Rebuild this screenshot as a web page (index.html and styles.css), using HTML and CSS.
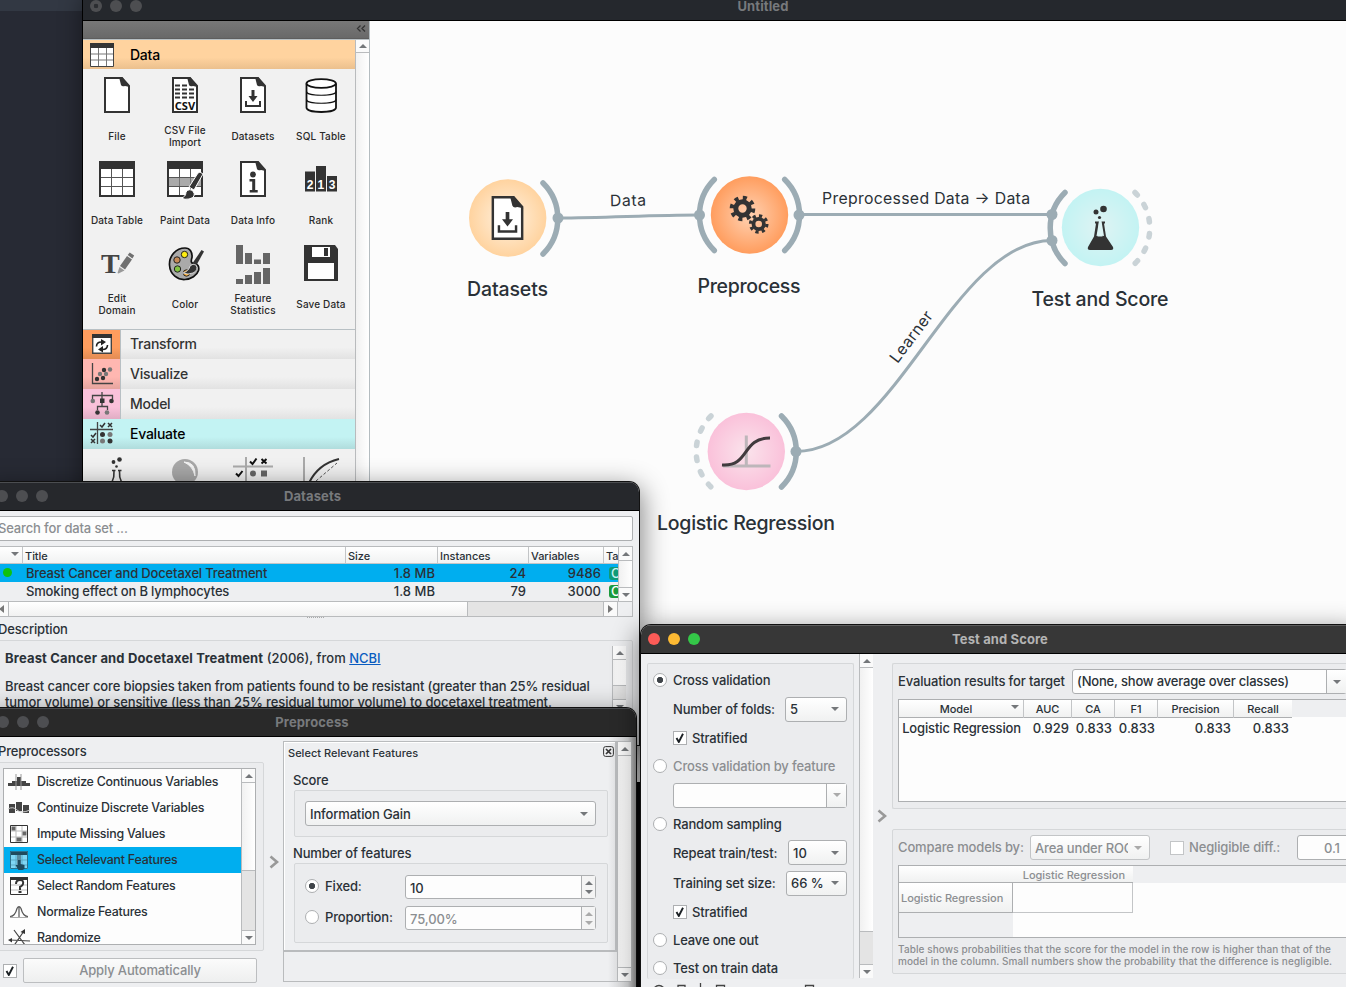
FILE: index.html
```html
<!DOCTYPE html>
<html lang="en">
<head>
<meta charset="utf-8">
<title>Orange</title>
<link rel="stylesheet" href="styles.css">
</head>
<body>
<svg class="defs" width="0" height="0">
  <defs>
    <symbol id="sheet" viewBox="0 0 36 36"><path d="M6 1h17l7 8v26H6z" fill="#fff" stroke="#333" stroke-width="2"/><path d="M20 0l2 8q1 2 4 1l5 1L23 0z" fill="#333"/></symbol>
    <symbol id="i-table" viewBox="0 0 36 36"><path d="M1 1h34v34H1z" fill="#fff" stroke="#333" stroke-width="2"/><path d="M0 0h36v8H0z" fill="#333"/><path d="M12.500 8v26M23.500 8v26M2 16.500h32M2 25.500h32" stroke="#555"/></symbol>
    <symbol id="i-download" viewBox="0 0 36 36"><use href="#sheet"/><path d="M11 24v5h14v-5" fill="none" stroke="#333" stroke-width="2"/><path d="M16.500 13h3v6h3l-4.500 6-4.500-6h3z" fill="#333"/></symbol>
    <symbol id="up" viewBox="0 0 8 4"><path d="M0 4L4 0l4 4z" fill="currentColor"/></symbol>
    <symbol id="down" viewBox="0 0 8 4"><path d="M0 0l4 4 4-4z" fill="currentColor"/></symbol>
    <symbol id="tick" viewBox="0 0 10 10"><path d="M1.500 5l2.300 4L8 .8" fill="none" stroke="#1d2226" stroke-width="1.900"/></symbol>
    <symbol id="chev" viewBox="0 0 10 14"><path d="M1.500 1.500L8 7l-6.500 5.500" fill="none" stroke="#999" stroke-width="2.600"/></symbol>
  </defs>
</svg>

<div class="desktop">
<section class="window main">
  <header class="titlebar"><span class="dots"><i class="mark"></i><i></i><i></i></span><span class="title">Untitled</span></header>
  <div class="workspace">
    <aside class="toolbox">
      <div class="dock-head"><svg width="10" height="7" viewBox="0 0 10 7"><path d="M4.500 .5l-3 3 3 3M9 .5l-3 3 3 3" fill="none" stroke="#333" stroke-width="1.300"/></svg></div>
      <div class="tool-area">
        <div class="tool-list">
          <div class="cat open data"><svg width="24" height="24"><path d="M.5.5h23v23H.5z" fill="#fff" stroke="#444"/><path d="M0 0h24v5H0z" fill="#333"/><path d="M1 11h22M1 17h22" stroke="#bbb" stroke-width="2"/><path d="M8.500 5v18M16.500 5v18" stroke="#777"/></svg><span>Data</span></div>
          <div class="tools">
            <div class="tool"><svg width="36" height="36"><use href="#sheet"/></svg><span>File</span></div>
            <div class="tool"><svg width="36" height="36"><use href="#sheet"/><path d="M8 8.500h14M8 12.500h20M8 16.500h20M8 20.500h20" stroke="#333" stroke-width="2" stroke-dasharray="5 2"/><text x="7.700" y="32.500" class="csv" textLength="20.500" lengthAdjust="spacingAndGlyphs">CSV</text></svg><span>CSV File Import</span></div>
            <div class="tool"><svg width="36" height="36"><use href="#i-download"/></svg><span>Datasets</span></div>
            <div class="tool"><svg width="36" height="36" fill="#fff" stroke="#111" stroke-width="1.800"><path d="M3.500 6.500v24c0 6 29.500 6 29.500 0v-24"/><ellipse cx="18.200" cy="6.500" rx="14.700" ry="4.300"/><path d="M3.500 14.500c0 5 29.500 5 29.500 0M3.500 22.500c0 5 29.500 5 29.500 0" fill="none" stroke-width="1.200"/></svg><span>SQL Table</span></div>
            <div class="tool"><svg width="36" height="36"><use href="#i-table"/></svg><span>Data Table</span></div>
            <div class="tool"><svg width="36" height="40" class="tall"><use href="#i-table" width="36" height="36"/><path d="M2 17h32v8H2z" fill="#aaa"/><path d="M12.500 17v8M23.500 17v8" stroke="#777"/><path d="M33 11l3 2-9 16-5-3 9-14z" fill="#333" stroke="#fff"/><path d="M14 37q5-1 5-6 3-4 7-1 4 6-4 8-4 1-8-1z" fill="#333" stroke="#fff"/></svg><span>Paint Data</span></div>
            <div class="tool"><svg width="36" height="36"><use href="#sheet"/><circle cx="18" cy="13.500" r="2.900" fill="#333"/><path d="M14.500 18h5.700v11h2.500v2.500h-8V29h2.500v-8.500h-2.700z" fill="#333"/></svg><span>Data Info</span></div>
            <div class="tool"><svg width="36" height="36"><path d="M2 10.500h10v20H2zM13 5h10v25.500H13zM24 15h10v15.500H24z" fill="#333"/><text x="3.700" y="27.500" class="rank">2</text><text x="14.500" y="27.500" class="rank">1</text><text x="25.700" y="27.500" class="rank">3</text></svg><span>Rank</span></div>
            <div class="tool"><svg width="36" height="36"><text x="2" y="28" class="tee">T</text><path d="M18.500 28l2-6 5 3.500-6 3z" fill="#999"/><path d="M21 21l7-10 5 3.500-7 10z" fill="#707070"/><path d="M28.700 10l2-2.500 4.500 3-1.800 3z" fill="#707070"/></svg><span>Edit Domain</span></div>
            <div class="tool"><svg width="36" height="36"><path d="M18 3c-9 0-16 8-15.500 17C3 30 11 35 18 34.500c6-.4 12-4 13.500-9 1-4-1-7-4.500-7-3.500 0-3-3-2-6C25.500 7 23 3 18 3z" fill="#aaa" stroke="#111" stroke-width="1.700"/><circle cx="17.500" cy="9.500" r="3.200" fill="#fe1" stroke="#222"/><circle cx="10" cy="15" r="3.200" fill="#c68a57" stroke="#222"/><circle cx="10.500" cy="24" r="3.200" fill="#82c341" stroke="#222"/><circle cx="19.500" cy="28" r="3.200" fill="#fbb040" stroke="#222"/><path d="M34.500 5l2.500 1.500-8 14.500-4-2z" fill="#333"/><path d="M16 28q6-2 7-7 3-3 6-1 3 5-3 8-5 2-10 0z" fill="#333" stroke="#eee" stroke-width=".8"/></svg><span>Color</span></div>
            <div class="tool"><svg width="36" height="40" class="tall"><g fill="#666"><path d="M1 0h7v19H1zM10 8h7v11h-7zM19 14.500h7V19h-7zM28 8h7v11h-7zM1 34h7v5H1zM10 30h7v9h-7zM19 27h7v12h-7zM28 23h7v16h-7z"/></g></svg><span>Feature Statistics</span></div>
            <div class="tool"><svg width="36" height="36"><path d="M1 0h31l3 4v32H1z" fill="#333"/><path d="M9 2h18v10H9zM5 18h26v16H5z" fill="#fff"/><path d="M21 3h4v8h-4z" fill="#333"/></svg><span>Save Data</span></div>
          </div>
          <div class="cat transform"><i><svg width="20" height="20"><path d="M.7.7h18.600v18.600H.7z" fill="#fff" stroke="#444" stroke-width="1.400"/><path d="M0 0h20v4H0z" fill="#333"/><path d="M4.500 12.500c0-3 2-4.500 5-4.500M15.500 11c0 3-2 4.500-5 4.500" fill="none" stroke="#222" stroke-width="1.600"/><path d="M9 5l5 3-5 3.500zM11 12l-5 3.500 5 3z" fill="#222"/></svg></i><span>Transform</span></div>
          <div class="cat visualize"><i><svg width="22" height="22"><path d="M1.500 0v20.500H22" fill="none" stroke="#444" stroke-width="1.300"/><g fill="#333"><circle cx="6" cy="16" r="2.200"/><circle cx="12" cy="15" r="2.200"/><circle cx="13" cy="7" r="2.200"/></g><g fill="#777"><circle cx="9" cy="11" r="2.200"/><circle cx="15" cy="11" r="2.200"/><circle cx="19" cy="6.500" r="2.200"/></g></svg></i><span>Visualize</span></div>
          <div class="cat model"><i><svg width="24" height="24"><path d="M2.500 7V3.500h20V7M12 0v8M7.500 18v-3.500h10V18M12 11v4" fill="none" stroke="#444" stroke-width="1.300"/><path d="M10 6.500h4.500V11H10z" fill="#333"/><circle cx="2.800" cy="9" r="2.300" fill="#777"/><circle cx="21.500" cy="9" r="2.300" fill="#333"/><circle cx="7.500" cy="20.500" r="2.300" fill="#333"/><circle cx="17" cy="20.500" r="2.300" fill="#777"/></svg></i><span>Model</span></div>
          <div class="cat open evaluate"><svg width="24" height="24"><path d="M0 7.500h23M7.500 0v22" stroke="#444" stroke-width="1.300"/><path d="M10 3l2 2 3-4M1 13l2 2 3-4M18 1l4 4M22 1l-4 4M1 17l4 4M5 17l-4 4" fill="none" stroke="#333" stroke-width="1.500"/><g fill="#333"><circle cx="12.500" cy="12.500" r="2.500"/><circle cx="20" cy="19" r="2.500"/></g><g fill="#777"><circle cx="20" cy="12.500" r="2.500"/><circle cx="12.500" cy="19" r="2.500"/></g></svg><span>Evaluate</span></div>
          <div class="tools last">
            <div class="tool"><svg width="36" height="36"><g fill="#333"><circle cx="14.500" cy="5" r="1.900"/><circle cx="20.500" cy="2.500" r="2.300"/><circle cx="17.500" cy="9.500" r="1.300"/></g><path d="M13 13.500h3.500M19 13.500h3.500M15 14q.5 6-2 11M20.500 14q-.5 6 2 11" fill="none" stroke="#333" stroke-width="1.600"/></svg></div>
            <div class="tool"><svg width="36" height="36"><circle cx="18" cy="15" r="13" fill="#a8a8a8"/><path d="M17 5q12 0 11 14-2-10-11-14z" fill="#f4f4f4" stroke="#f4f4f4"/></svg></div>
            <div class="tool"><svg width="40" height="36"><path d="M0 9.500h40M13 0v36" stroke="#aaa" stroke-width="2"/><path d="M17 4.500l2.500 2.500 4-5.500M3 16.500l2.500 2.500L9.500 14M28.500 2l5 4.500M33.500 2l-5 4.500" fill="none" stroke="#111" stroke-width="2"/><circle cx="20" cy="16.500" r="3" fill="#666"/><path d="M28 13.500h6v6h-6z" fill="#666"/></svg></div>
            <div class="tool"><svg width="38" height="36"><path d="M2 0v36" stroke="#aaa" stroke-width="2"/><path d="M7 26Q16 7 37 2" fill="none" stroke="#333" stroke-width="2"/><path d="M14 24L35 6" stroke="#555" stroke-dasharray="3 2"/></svg></div>
          </div>
        </div>
        <div class="scroll"><b><svg width="8" height="4"><use href="#up"/></svg></b></div>
      </div>
    </aside>
    <svg class="canvas" width="976" height="760" viewBox="370 21 976 760">
      <defs>
        <radialGradient id="gd"><stop offset="0" stop-color="#fff2e1"/><stop offset="1" stop-color="#ffd39f"/></radialGradient>
        <radialGradient id="gp"><stop offset=".1" stop-color="#ffcdab"/><stop offset="1" stop-color="#ff9d5e"/></radialGradient>
        <radialGradient id="gt"><stop offset=".1" stop-color="#dcf3f3"/><stop offset="1" stop-color="#c3f3f3"/></radialGradient>
        <radialGradient id="gl"><stop offset=".1" stop-color="#fae0ea"/><stop offset="1" stop-color="#fac1da"/></radialGradient>
      </defs>
      <g class="link">
        <path d="M558 218C605 218 650 215 699 215"/><path d="M799 214.500H1052"/><path d="M796 451.500C896 451.500 952 240.500 1052 240.500"/>
      </g>
      <g class="arc">
        <path d="M543 183a50 50 0 0 1 0 71"/><path d="M714.300 179.500a50 50 0 0 0 0 71"/><path d="M784.700 179.500a50 50 0 0 1 0 71"/><path d="M1065 192.500a50 50 0 0 0 0 71"/><path d="M781.500 416a50 50 0 0 1 0 71"/>
        <path class="idle" d="M1135 192.500a50 50 0 0 1 0 71"/><path class="idle" d="M711 416a50 50 0 0 0 0 71"/>
      </g>
      <g fill="#9cacb4"><circle cx="558" cy="218" r="5.500"/><circle cx="699.500" cy="215" r="5.500"/><circle cx="799" cy="215" r="5.500"/><circle cx="1052" cy="214.500" r="5.500"/><circle cx="1052" cy="240.500" r="5.500"/><circle cx="796" cy="451.500" r="5.500"/></g>
      <circle cx="507.700" cy="218" r="38.700" fill="url(#gd)"/><circle cx="749.500" cy="215" r="38.700" fill="url(#gp)"/><circle cx="1100.500" cy="227.500" r="38.700" fill="url(#gt)"/><circle cx="746.300" cy="451.500" r="38.700" fill="url(#gl)"/>
      <use href="#i-download" x="485" y="196" width="45" height="44"/>
      <g fill="none" stroke="#333"><circle cx="742.500" cy="208.500" r="6.700" stroke-width="5"/><circle cx="742.500" cy="208.500" r="10.700" stroke-width="4.200" stroke-dasharray="4 4.403"/><circle cx="758.700" cy="224" r="5.200" stroke-width="3.800"/><circle cx="758.700" cy="224" r="8.200" stroke-width="3.200" stroke-dasharray="3.200 3.240"/></g>
      <g fill="#333"><circle cx="1103.500" cy="209" r="3.300"/><circle cx="1096" cy="212" r="2.500"/><circle cx="1099.500" cy="217.500" r="1.600"/><path d="M1095 221.500h4l-1.500 15h5l-1.500-15h4v2l-1 0 2 13 7 10.500q1 3-2 3h-21q-3 0-2-3l6-10.500 2-13h-1z"/></g>
      <path d="M1099 221l-2.500 15q3.500-1 7.500 0l-2.500-15z" fill="#dcf3f3"/>
      <path d="M746.300 435.500v31M723 466h47.500" stroke="#bdb6ba" stroke-width="3"/><path d="M722 465c28 2 19-27 48-27" fill="none" stroke="#413b3e" stroke-width="3"/>
      <g class="node-label"><text x="467" y="295.500" textLength="81">Datasets</text><text x="697.500" y="292.500" textLength="103">Preprocess</text><text x="1031.500" y="305.500" textLength="137">Test and Score</text><text x="657" y="529.500" textLength="178">Logistic Regression</text></g>
      <g class="link-label"><text x="610" y="206" textLength="36" transform="rotate(-1 628 200)">Data</text><text x="822" y="204" textLength="208">Preprocessed Data → Data</text><text x="-30" y="0" textLength="60" transform="translate(915.500 340) rotate(-53)">Learner</text></g>
    </svg>
  </div>
</section>

<section class="window datasets">
  <header class="titlebar"><span class="dots"><i></i><i></i><i></i></span><span class="title">Datasets</span></header>
  <div class="body">
    <div class="search">Search for data set ...</div>
    <div class="grid-table">
      <div class="gt-main">
        <div class="gt-row head"><span class="sort"><svg width="8" height="4"><use href="#down"/></svg></span><span>Title</span><span>Size</span><span>Instances</span><span>Variables</span><span>Ta</span></div>
        <div class="gt-row sel"><span><i class="dot"></i></span><span>Breast Cancer and Docetaxel Treatment</span><span>1.8 MB</span><span>24</span><span>9486</span><span><em>C</em></span></div>
        <div class="gt-row"><span></span><span>Smoking effect on B lymphocytes</span><span>1.8 MB</span><span>79</span><span>3000</span><span><em>C</em></span></div>
      </div>
      <div class="scroll"><b><svg width="8" height="4"><use href="#up"/></svg></b><s></s><b><svg width="8" height="4"><use href="#down"/></svg></b></div>
      <div class="hscroll"><b><svg width="5" height="8"><path d="M5 0L0 4l5 4z" fill="#777"/></svg></b><s></s><u></u><b><svg width="5" height="8"><path d="M0 0l5 4-5 4z" fill="#777"/></svg></b></div>
      <div class="corner"></div>
    </div>
    <div class="grip"></div>
    <div class="section-name">Description</div>
    <div class="group desc">
      <div class="desc-text"><p class="ln1"><strong>Breast Cancer and Docetaxel Treatment</strong> (2006), from <a>NCBI</a></p><p class="ln2">Breast cancer core biopsies taken from patients found to be resistant (greater than 25% residual</p><p class="ln3">tumor volume) or sensitive (less than 25% residual tumor volume) to docetaxel treatment.</p></div>
      <div class="scroll"><b><svg width="8" height="4"><use href="#up"/></svg></b><s></s><u></u><b><svg width="8" height="4"><use href="#down"/></svg></b></div>
    </div>
  </div>
</section>

<section class="window preprocess">
  <header class="titlebar"><span class="dots"><i></i><i></i><i></i></span><span class="title">Preprocess</span></header>
  <div class="body">
    <div class="left-col">
      <div class="section-name">Preprocessors</div>
      <div class="group">
        <div class="list">
          <ul>
            <li><svg width="22" height="20"><path d="M0 11h4V9h5V5h4v4h5v2h4v3H0z" fill="#444"/><path d="M8 2v16M13 2v16" stroke="#999"/></svg><span>Discretize Continuous Variables</span></li>
            <li><svg width="22" height="20"><path d="M1 6h6v9H1zM8 4h6v9H8zM15 7h6v8h-6z" fill="#444"/><path d="M0 11q5-3 9 1t13 0" fill="none" stroke="#ccc"/></svg><span>Continuize Discrete Variables</span></li>
            <li><svg width="22" height="20"><path d="M2.500 1.500h17v17h-17z" fill="#fff" stroke="#333"/><path d="M8 2v16M14 2v16M3 7h16M3 13h16" stroke="#bbb"/><path d="M3.500 2.500h4v4h-4zM14.500 7.500h4v4h-4zM8.500 13.500h5v4h-5z" fill="#666"/></svg><span>Impute Missing Values</span></li>
            <li class="sel"><svg width="22" height="20"><path d="M2 1h18v18H2z" fill="#7fd6f5"/><path d="M2 1h18v4H2z" fill="#1f4a5e"/><path d="M8 5v14M14 5v14M2 10h18M2 15h18" stroke="#5ba9c6"/><path d="M9 5h4v13H9z" fill="#5a8ba0"/><path d="M2.500 1.500h17v17h-17z" fill="none" stroke="#2b718e"/><path d="M10 10h2.500v4l4 1v4l-2 1h-4l-3-5h2.500z" fill="#1f4a5e"/></svg><span>Select Relevant Features</span></li>
            <li><svg width="22" height="20"><path d="M2.500 1.500h17v17h-17z" fill="#fff" stroke="#333"/><path d="M2 1h18v3H2z" fill="#333"/><path d="M3 9h16M3 14h16" stroke="#bbb"/><path d="M8 8q0-4 4-4t3 4q-.5 2-3 3v3M10.500 16h3" fill="none" stroke="#333" stroke-width="2"/></svg><span>Select Random Features</span></li>
            <li><svg width="22" height="20"><path d="M2 15.500h18" stroke="#aaa"/><path d="M2 14.500q5 0 7-8 2-4 4 0 2 8 7 8M11 5v10" fill="none" stroke="#555" stroke-width="1.200"/></svg><span>Normalize Features</span></li>
            <li><svg width="22" height="20"><path d="M2 12l20 1M6 2l11 15M5 19L16 3" fill="none" stroke="#444" stroke-width="1.200"/><path d="M12.500 4L17 1v5zM4 10l-4 2 4 2.500z" fill="#333"/></svg><span>Randomize</span></li>
          </ul>
          <div class="scroll"><b><svg width="8" height="4"><use href="#up"/></svg></b><s></s><u></u><b><svg width="8" height="4"><use href="#down"/></svg></b></div>
        </div>
      </div>
      <div class="apply"><span class="check"><svg width="10" height="10"><use href="#tick"/></svg></span><span class="button">Apply Automatically</span></div>
    </div>
    <svg class="chevron" width="10" height="14"><use href="#chev"/></svg>
    <div class="right-col">
      <div class="flow">
        <div class="card">
          <div class="card-head"><span>Select Relevant Features</span><svg width="11" height="11"><rect x=".6" y=".6" width="9.800" height="9.800" rx="2" fill="none" stroke="#333"/><path d="M3 3l5 5M8 3L3 8" stroke="#333" stroke-width="1.700"/></svg></div>
          <div class="section-name score">Score</div>
          <div class="group g-score"><div class="combo"><span>Information Gain</span><svg width="8" height="4"><use href="#down"/></svg></div></div>
          <div class="section-name numf">Number of features</div>
          <div class="group g-num">
            <div class="opt"><i class="radio on"></i><span>Fixed:</span><div class="spin"><span>10</span><b><svg width="8" height="4"><use href="#up"/></svg><svg width="8" height="4"><use href="#down"/></svg></b></div></div>
            <div class="opt"><i class="radio"></i><span>Proportion:</span><div class="spin off"><span>75,00%</span><b><svg width="8" height="4"><use href="#up"/></svg><svg width="8" height="4"><use href="#down"/></svg></b></div></div>
          </div>
        </div>
      </div>
      <div class="scroll"><b><svg width="8" height="4"><use href="#up"/></svg></b><s></s><b><svg width="8" height="4"><use href="#down"/></svg></b></div>
    </div>
  </div>
</section>

<section class="window score-win">
  <header class="titlebar"><span class="dots color"><i></i><i></i><i></i></span><span class="title">Test and Score</span></header>
  <div class="body">
    <div class="sampling">
      <div class="group">
        <div class="r" style="height:28px"><i class="radio on"></i><span>Cross validation</span></div>
        <div class="r sub" style="height:30px"><span>Number of folds:</span><div class="combo c62"><span>5</span><svg width="8" height="4"><use href="#down"/></svg></div></div>
        <div class="r sub" style="height:28px"><span class="check"><svg width="10" height="10"><use href="#tick"/></svg></span><span>Stratified</span></div>
        <div class="r muted" style="height:28px"><i class="radio"></i><span>Cross validation by feature</span></div>
        <div class="r sub" style="height:30px"><div class="combo edit"><span></span><b class="dim"><svg width="8" height="4"><use href="#down"/></svg></b></div></div>
        <div class="r" style="height:28px"><i class="radio"></i><span>Random sampling</span></div>
        <div class="r sub" style="height:29px"><span>Repeat train/test:</span><div class="combo c59"><span>10</span><svg width="8" height="4"><use href="#down"/></svg></div></div>
        <div class="r sub" style="height:32px"><span>Training set size:</span><div class="combo c61"><span>66 %</span><svg width="8" height="4"><use href="#down"/></svg></div></div>
        <div class="r sub" style="height:26px"><span class="check"><svg width="10" height="10"><use href="#tick"/></svg></span><span>Stratified</span></div>
        <div class="r" style="height:30px"><i class="radio"></i><span>Leave one out</span></div>
        <div class="r" style="height:26px"><i class="radio"></i><span>Test on train data</span></div>
      </div>
      <div class="scroll"><b><svg width="8" height="4"><use href="#up"/></svg></b><s></s><u></u><b><svg width="8" height="4"><use href="#down"/></svg></b></div>
      <svg class="status" width="220" height="10" viewBox="0 -1 220 10"><path d="M7 9q5-5 10 0M31 9V6.500h7V9M53.500 4v5M69.500 9V6.500h8V9M158.500 9V6.500h8V9" fill="none" stroke="#444" stroke-width="1.300"/></svg>
    </div>
    <svg class="chevron" width="10" height="14"><use href="#chev"/></svg>
    <div class="results">
      <div class="group top">
        <div class="line"><span class="ev">Evaluation results for target</span><div class="combo edit wide"><span>(None, show average over classes)</span><b><svg width="8" height="4"><use href="#down"/></svg></b></div></div>
        <div class="res">
          <div class="res-row h"><span>Model<svg width="8" height="4"><use href="#down"/></svg></span><span>AUC</span><span>CA</span><span>F1</span><span>Precision</span><span>Recall</span></div>
          <div class="res-row"><span>Logistic Regression</span><span>0.929</span><span>0.833</span><span>0.833</span><span>0.833</span><span>0.833</span></div>
        </div>
      </div>
      <div class="group bottom">
        <div class="line"><span class="cmp">Compare models by:</span><div class="combo c120"><span>Area under ROC</span><svg width="8" height="4"><use href="#down"/></svg></div><span class="check"></span><span class="neg">Negligible diff.:</span><div class="num">0.1</div></div>
        <div class="cmp-table"><div class="ch">Logistic Regression</div><div class="fill"></div><div class="rh">Logistic Regression</div><div class="cell"></div><div class="void"></div></div>
        <p class="note">Table shows probabilities that the score for the model in the row is higher than that of the<br>model in the column. Small numbers show the probability that the difference is negligible.</p>
      </div>
    </div>
  </div>
</section>
</div>
</body>
</html>
```
FILE: styles.css
```css
* { box-sizing: border-box; }
body { margin: 0; overflow: hidden; font: 500 13px/16px Inter, "Liberation Sans", sans-serif; color: #2a3137; letter-spacing: -.15px; }
p, ul { margin: 0; padding: 0; list-style: none; }
svg { display: block; flex: none; overflow: visible; }
span, p { white-space: nowrap; }
i, em { font-style: normal; }
s, u { text-decoration: none; }
.defs { position: absolute; }
.desktop { position: relative; width: 1346px; height: 987px; overflow: hidden; background: linear-gradient(#323843 11px, #272a34 11px, #272a34 481px, #0a0a0c 700px); }

/* windows */
.window { position: absolute; display: flex; flex-direction: column; overflow: hidden; border-radius: 10px 10px 0 0; background: #eeeff1; box-shadow: 0 0 0 1px #111, 0 8px 26px 4px rgba(0,0,0,.45); }
.main { left: 83px; top: -9px; width: 1360px; height: 791px; background: #fcfcfc; box-shadow: 0 0 0 1px #000, 0 6px 22px 2px rgba(0,0,0,.4); }
.datasets { left: -14px; top: 482px; width: 653px; height: 263px; }
.preprocess { left: -12px; top: 708px; width: 648px; height: 300px; }
.score-win { left: 641px; top: 625px; width: 718px; height: 391px; }
.titlebar { position: relative; flex: none; display: flex; align-items: center; justify-content: center; height: 29px; border-bottom: 1px solid #000; background: #26282c; box-shadow: inset 0 1px #4b4d50; color: #77797c; font-weight: 700; letter-spacing: .12px; }
.preprocess .titlebar { background: #292929; }
.score-win .titlebar { background: #373737; color: #b3b3b3; box-shadow: inset 0 1px #5d5d5d; }
.main .titlebar { height: 30px; background: #25282d; }
.dots { position: absolute; left: 7px; display: flex; gap: 8px; }
.dots i { width: 12px; height: 12px; border-radius: 50%; background: #4d4e51; }
.dots .mark { background: radial-gradient(#2b2d31 2px, #4d4e51 2.600px); }
.datasets .dots { left: 10px; }
.preprocess .dots { left: 9px; }
.dots.color i:nth-child(1) { background: #fc5b57; }
.dots.color i:nth-child(2) { background: #fdba33; }
.dots.color i:nth-child(3) { background: #34c748; }
.body { flex: 1; min-height: 0; }

/* shared controls */
.group { border: 1px solid #d5d7d9; border-radius: 2px; background: #ebecee; }
.section-name { line-height: 16px; }
.scroll { flex: none; display: flex; flex-direction: column; width: 14px; border-left: 1px solid #b9bbbd; background: linear-gradient(90deg, #f1f1f1, #fff); color: #74777a; }
.scroll b { flex: none; display: grid; place-items: center; height: 14px; background: #fafafa; border-bottom: 1px solid #b9bbbd; }
.scroll b:last-child:not(:first-child) { border-bottom: 0; border-top: 1px solid #b9bbbd; }
.scroll s { flex: 1; }
.scroll u { background: #e4e4e4; border-top: 1px solid #b9bbbd; }
.combo { display: flex; align-items: center; justify-content: space-between; height: 25px; padding: 0 7px 0 4px; border: 1px solid #adafb1; border-radius: 3px; background: linear-gradient(#fff, #f0f1f1); color: #2a3137; }
.combo svg { color: #74777a; }
.combo.edit { padding: 0 0 0 4px; background: #fdfdfd; }
.combo.edit b { display: grid; place-items: center; align-self: stretch; width: 20px; border-left: 1px solid #adafb1; background: linear-gradient(#fff, #f0f1f1); }
.combo .dim svg { color: #aaa; }
.radio { flex: none; width: 14px; height: 14px; border: 1px solid #adafb1; border-radius: 50%; background: #fff; }
.radio.on { background: radial-gradient(#3f4449 2.800px, #fff 3.500px); }
.check { flex: none; display: grid; place-items: center; width: 14px; height: 14px; border: 1px solid #adafb1; background: #fff; }
.chevron { flex: none; }

/* main window */
.workspace { display: flex; }
.toolbox { flex: none; width: 287px; height: 761px; border-right: 1px solid #b4bcc0; background: #f1f1f1; }
.dock-head { display: flex; justify-content: flex-end; height: 18px; padding: 4px 3px; border-bottom: 1px solid #5e5e5e; background: linear-gradient(#787878, #696969); }
.tool-area { display: flex; height: 743px; border-top: 1px solid #b8c0c4; }
.tool-list { width: 272px; }
.tool-area > .scroll { width: 14px; }
.tool-area > .scroll b { height: 13px; }
.cat { display: flex; align-items: center; height: 30px; font-size: 14px; letter-spacing: -.25px; background: linear-gradient(#f1f1f1 60%, #e2e2e2); color: #333; }
.cat i { display: grid; place-items: center; width: 38px; height: 30px; margin-right: 9px; border-right: 1px solid #b8c0c4; }
.cat.open { padding-left: 7px; color: #000; }
.cat.open svg { margin-right: 16px; }
.cat.data { height: 29px; background: linear-gradient(#ffd39f 60%, #ebc08e); }
.evaluate { background: linear-gradient(#c3f3f3 60%, #b0dcdc); }
.transform { padding-bottom: 1px; border-top: 1px solid #b8c0c4; }
.transform i { height: 29px; background: linear-gradient(#ff9d5e 60%, #e38c54); }
.visualize i { background: linear-gradient(#ffb7b1 60%, #e6a59f); }
.model i { background: linear-gradient(#fac1da 60%, #e0adc4); }
.tools { display: grid; grid-template-columns: repeat(4, 68px); grid-auto-rows: 84px; padding-bottom: 8px; }
.tool { display: flex; flex-direction: column; align-items: center; gap: 6px; padding-top: 8px; font-size: 10px; line-height: 12px; color: #2a2a2a; letter-spacing: .14px; }
.tool svg.tall { margin-bottom: -4px; }
.tool span { display: grid; align-content: center; height: 34px; max-width: 54px; text-align: center; white-space: normal; }
.csv { font: 700 10px "Noto Sans", sans-serif; fill: #111; letter-spacing: 0; }
.rank { font: 700 12px "Liberation Sans", sans-serif; fill: #fff; }
.tee { font: 700 28px "Liberation Serif", serif; fill: #444; letter-spacing: 0; }
.canvas { font-family: Inter, sans-serif; letter-spacing: 0; }
.link { fill: none; stroke: #9cacb4; stroke-width: 3; }
.arc { fill: none; stroke: #9cacb4; stroke-width: 5.500; stroke-linecap: round; }
.idle { stroke: #cad3d7; stroke-dasharray: 3.500 11.500; }
.node-label { font-size: 19.500px; font-weight: 500; fill: #2a3137; }
.link-label { font-size: 15.800px; font-weight: 400; fill: #2a3137; }

/* datasets window */
.datasets .body { padding: 5px 6px 0 8px; }
.search { height: 25px; padding: 3px; border: 1px solid #adafb1; border-radius: 2px; background: #fdfdfd; color: #8b8e91; line-height: 17px; }
.grid-table { display: grid; grid-template: 54px 15px / 1fr 14px; margin-top: 5px; border: 1px solid #b9bbbd; }
.gt-main { overflow: hidden; }
.gt-row { display: grid; grid-template-columns: 28px 323px 92px 91px 75px 1fr; height: 18px; line-height: 18px; letter-spacing: .02px; }
.gt-row span { padding: 0 3px; text-align: right; overflow: hidden; }
.gt-row span:nth-child(2) { text-align: left; letter-spacing: -.17px; }
.gt-row.head { height: 17px; font-size: 11px; border-bottom: 1px solid #c3c5c7; background: linear-gradient(#fff, #f1f2f2); letter-spacing: -.05px; }
.gt-row.head span { border-right: 1px solid #c3c5c7; text-align: left; padding: 0 2px; letter-spacing: -.05px; }
.gt-row.head span:last-child { border: 0; }
.gt-row.head .sort { display: flex; justify-content: flex-end; padding: 5px 3px 0 0; color: #74777a; }
.sel { background: #00aeef; }
.dot { display: block; width: 9px; height: 9px; margin: 4px 0 0 6px; border-radius: 50%; background: #0fc20f; }
.gt-row span:first-child { padding-left: 2px; }
.gt-row em { display: block; width: 16px; height: 13px; margin: 3px 0 0 2px; padding-left: 2px; border-radius: 3px; background: #1b9a3c; color: #fff; line-height: 13px; text-align: left; }
.gt-row.sel em { background: #0f9b76; color: #c7f3f5; }
.hscroll { display: flex; border-top: 1px solid #b9bbbd; }
.hscroll b { display: grid; place-items: center; width: 14px; background: #fafafa; border-right: 1px solid #b9bbbd; }
.hscroll s { width: 459px; background: linear-gradient(#fff, #f1f1f1); border-right: 1px solid #b9bbbd; }
.hscroll u { flex: 1; background: #e4e4e4; border-right: 1px solid #b9bbbd; }
.corner { border-top: 1px solid #b9bbbd; }
.grip { width: 17px; height: 4px; margin: 0 0 0 313px; border-top: 1px dotted #aaa; }
.datasets .section-name { margin: 0 0 3px 4px; }
.desc { display: flex; justify-content: space-between; height: 115px; padding: 5px 6px 0 10px; }
.desc-text p { line-height: 16px; letter-spacing: -.135px; }
.desc-text .ln3 { letter-spacing: -.1px; }
.desc-text .ln1 { margin: 4px 0 12px; letter-spacing: 0; }
strong { font-weight: 700; letter-spacing: .16px; }
a { color: #0a5cc0; text-decoration: underline; }
.desc .scroll { height: 67px; border-right: 0; }
.desc .scroll u { height: 14px; }

/* preprocess window */
.preprocess .body { display: flex; padding: 4px 5px 0 9px; background: linear-gradient(90deg, #eeeff1 620px, #d3d4d5 640px, #999 648px); }
.left-col { flex: none; width: 267px; }
.left-col .section-name { margin: 2px 0 0 1px; }
.left-col .group { height: 189px; margin-top: 3px; padding: 5px 7px 0 5px; }
.list { display: flex; height: 177px; border: 1px solid #adafb1; background: #fdfdfd; }
.list ul { flex: 1; overflow: hidden; }
.list li { display: flex; align-items: center; gap: 7px; height: 26px; padding-left: 4px; font-size: 12.400px; letter-spacing: -.24px; }
.list .scroll u { height: 60px; }
.apply { display: flex; align-items: center; gap: 6px; margin: 7px 0 0 6px; }
.button { width: 234px; height: 25px; border: 1px solid #bcbec0; border-radius: 2px; background: linear-gradient(#fbfbfb, #eeefef); color: #8b8e91; line-height: 23px; text-align: center; }
.preprocess .chevron { margin: 114px 4px 0 5px; }
.right-col { flex: none; display: flex; width: 349px; height: 241px; border: 1px solid #b9bbbd; }
.flow { flex: 1; }
.card { height: 210px; padding: 0 7px 0 9px; border: solid #b9bbbd; border-width: 0 2px 2px 0; box-shadow: inset 1px 1px #fff; }
.card-head { display: flex; justify-content: space-between; margin: 0 -6px 0 -5px; padding-top: 4px; font-size: 11px; line-height: 14px; letter-spacing: .02px; }
.score { margin-top: 12px; }
.g-score { height: 47px; margin: 2px 0 0 1px; padding: 10px 11px 10px 10px; }
.numf { margin-top: 8px; }
.g-num { display: grid; align-content: start; gap: 7px; height: 80px; margin: 2px 0 0 1px; padding: 11px 11px 0 10px; }
.opt { display: flex; align-items: center; gap: 6px; height: 24px; }
.opt > .radio, .opt > span { margin-bottom: 3px; }
.opt .spin { margin-left: auto; }
.spin { display: flex; width: 191px; height: 24px; border: 1px solid #adafb1; border-radius: 3px; background: #fdfdfd; }
.spin span { flex: 1; padding: 4px; }
.spin b { display: grid; align-content: center; justify-items: center; gap: 5px; width: 14px; border-left: 1px solid #adafb1; background: #f4f4f4; color: #74777a; }
.spin.off { color: #8b8e91; }
.spin.off b { color: #aaa; }

/* test and score window */
.score-win .body { display: flex; }
.sampling { flex: none; display: grid; grid-template: 324px 9px / 212px 14px; padding-left: 6px; width: 233px; }
.sampling .group { height: 316px; width: 207px; margin-top: 9px; padding: 2px 6px 0 5px; overflow: hidden; border-bottom: 0; }
.sampling .scroll u { height: 33px; }
.status { grid-column: 1 / 3; }
.r { display: flex; align-items: center; gap: 6px; }
.sub { padding-left: 20px; }
.r .combo { margin-left: auto; }
.r .check { margin-right: -1px; }
.c62 { width: 62px; } .c59 { width: 59px; } .c61 { width: 61px; }
.r .combo span { letter-spacing: 0; }
.r .combo.edit { width: 174px; }
.muted, .bottom { color: #8b8e91; }
.score-win .chevron { margin: 155px 5px 0 3px; }
.results { flex: 1; padding-top: 9px; }
.top { height: 146px; padding: 5px; margin-bottom: 20px; border-right: 0; }
.line { display: flex; align-items: center; height: 25px; }
.line > span { margin-bottom: 1px; }
.ev { width: 174px; }
.combo.wide { width: 275px; }
.combo.wide > span { margin-bottom: 1px; letter-spacing: -.19px; }
.res { height: 103px; margin-top: 5px; border: 1px solid #adafb1; background: linear-gradient(#eeeff1 17px, #fdfdfd 17px); }
.res-row { display: grid; grid-template-columns: 125px 48px 43px 43px 76px 58px; line-height: 21px; letter-spacing: 0; }
.res-row span { padding-right: 3px; text-align: right; }
.res-row:not(.h) span:first-child { letter-spacing: -.14px; }
.res-row.h { width: 393px; height: 18px; font-size: 11px; line-height: 18px; background: linear-gradient(#fff, #f0f1f1); border-bottom: 1px solid #adafb1; letter-spacing: -.05px; }
.res-row.h span { position: relative; padding: 0; text-align: center; border-right: 1px solid #c3c5c7; }
.res-row.h span:first-child { padding-right: 10px; }
.res-row.h span:last-child { border: 0; }
.res-row.h svg { position: absolute; right: 4px; top: 5px; color: #74777a; }
.bottom { height: 145px; padding: 5px; }
.cmp { width: 132px; }
.c120 { width: 120px; color: #8b8e91; border-color: #c3c5c7; gap: 6px; }
.c120 svg { color: #aaa; }
.c120 span { overflow: hidden; }
.line .check { margin: 0 5px 0 20px; border-color: #c3c5c7; }
.neg { width: 108px; }
.num { width: 62px; height: 25px; padding: 4px 0 4px 26px; border: 1px solid #adafb1; border-radius: 3px; background: #fdfdfd; }
.cmp-table { display: grid; grid-template: 17px 30px 24px / 114px 120px 1fr; height: 73px; margin-top: 5px; border: 1px solid #adafb1; background: #fdfdfd; font-size: 11px; letter-spacing: -.03px; }
.ch { grid-column: 1 / 3; padding-right: 8px; line-height: 18px; background: linear-gradient(#fff, #f0f1f1); border-bottom: 1px solid #adafb1; text-align: right; }
.fill { background: #eeeff1; }
.rh { padding-left: 2px; line-height: 30px; background: linear-gradient(#fff, #f0f1f1); border: solid #adafb1; border-width: 0 1px 1px 0; }
.cell { border: solid #c3c5c7; border-width: 0 1px 1px 0; }
.void { grid-column: 1; background: #eeeff1; }
.note { margin-top: 5px; font-size: 10px; line-height: 12px; letter-spacing: .09px; }
```
